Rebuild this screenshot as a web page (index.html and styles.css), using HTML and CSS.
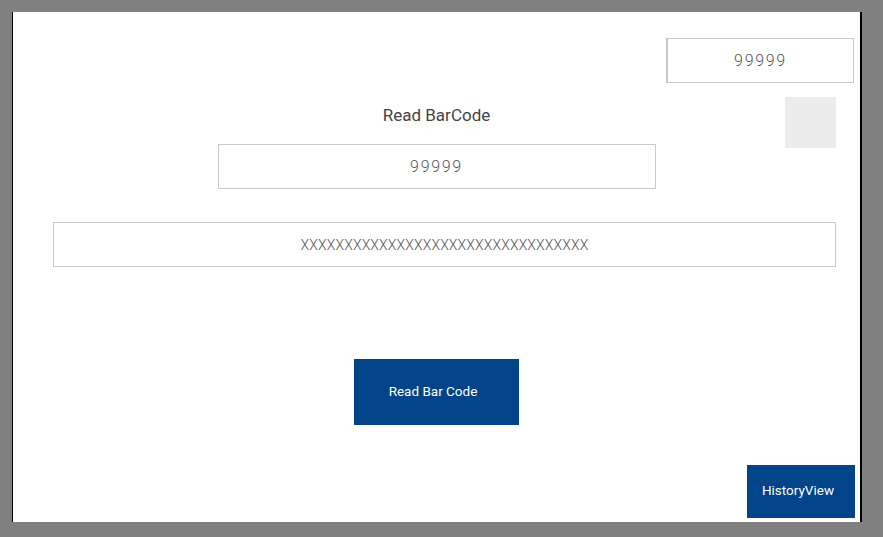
FILE: index.html
```html
<!DOCTYPE html>
<html lang="en">

<head>
    <meta charset="UTF-8">
    <meta name="viewport" content="width=device-width, initial-scale=1.0">
    <title>Read BarCode</title>
    <link rel="stylesheet" href="styles.css">
</head>

<body>
    <div class="panel">
        <div class="top-row">
            <input type="text" class="field field-small" value="99999" readonly>
        </div>

        <div class="read-area">
            <div class="label">Read BarCode</div>
            <div class="preview"></div>
            <input type="text" class="field field-code" value="99999" readonly>
        </div>

        <input type="text" class="field field-wide" value="XXXXXXXXXXXXXXXXXXXXXXXXXXXXXXXXX" readonly>

        <div class="action-row">
            <button class="btn btn-read">Read Bar Code</button>
        </div>

        <div class="bottom-row">
            <button class="btn btn-history">HistoryView</button>
        </div>
    </div>
</body>

</html>
```

FILE: styles.css
```css
body {
    margin: 0;
    background-color: #808080;
    padding: 12px 21px 15px 12px;
    font-family: Roboto, "Liberation Sans", sans-serif;
}

.panel {
    background-color: #fff;
    border-left: 1px solid #000;
    border-right: 2px solid #000;
    height: 510px;
    box-sizing: border-box;
    display: flex;
    flex-direction: column;
}

.top-row {
    display: flex;
    justify-content: flex-end;
    padding-top: 26px;
    padding-right: 6px;
}

.field {
    box-sizing: border-box;
    height: 45px;
    margin: 0;
    padding: 0;
    border: 1px solid #c8c8c8;
    background: #fff;
    text-align: center;
    font-family: Roboto, "Liberation Sans", sans-serif;
    font-weight: 300;
    font-size: 16px;
    letter-spacing: 1.7px;
    color: #555;
    outline: none;
}

.field-small {
    width: 188px;
    border-left-width: 2px;
}

.read-area {
    display: grid;
    grid-template-columns: 1fr 438px 1fr;
    margin-top: 14px;
}

.label {
    grid-column: 2;
    grid-row: 1;
    text-align: center;
    font-size: 17px;
    line-height: 20px;
    color: #444;
    padding: 8px 0 19px;
}

.preview {
    grid-column: 3;
    grid-row: 1 / span 2;
    justify-self: end;
    align-self: start;
    width: 51px;
    height: 51px;
    margin-right: 24px;
    background-color: #ececec;
}

.field-code {
    grid-column: 2;
    grid-row: 2;
    width: 438px;
}

.field-wide {
    width: 783px;
    margin: 33px 0 0 40px;
    font-size: 14px;
    letter-spacing: 0.15px;
    color: #555;
}

.action-row {
    display: flex;
    justify-content: center;
    margin-top: 92px;
}

.btn {
    border: none;
    background-color: #014487;
    color: #fff;
    font-family: Roboto, "Liberation Sans", sans-serif;
    font-size: 13.5px;
    cursor: pointer;
    padding: 0 6px 2px 0;
}

.btn-read {
    width: 165px;
    height: 66px;
    margin-right: 1px;
}

.bottom-row {
    display: flex;
    justify-content: flex-end;
    padding-right: 5px;
    margin-top: 40px;
}

.btn-history {
    width: 108px;
    height: 53px;
    padding-bottom: 3px;
}
```
